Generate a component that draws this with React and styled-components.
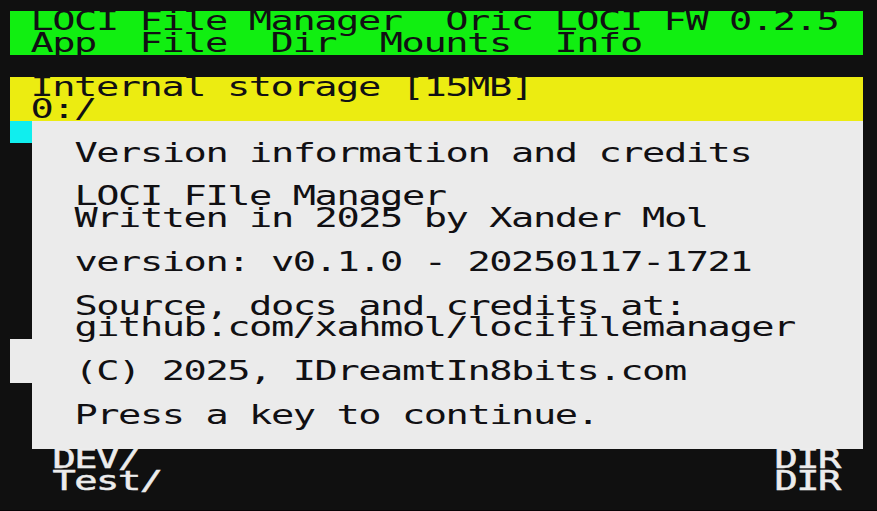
import React from "react";
import styled, { createGlobalStyle } from "styled-components";

const CELL = 21.87;
const ROW = 21.87;

const GlobalStyle = createGlobalStyle`
  body {
    margin: 0;
    background: #101010;
    overflow: hidden;
  }
`;

const Screen = styled.main`
  box-sizing: border-box;
  width: 877px;
  height: 511px;
  padding: 11.35px 14px 0 10.4px;
  display: flex;
  flex-direction: column;
  background: #101010;
  border-bottom: 1px solid #080406;
  overflow: hidden;
`;

const Bar = styled.header`
  flex: none;
  height: ${ROW * 2}px;
  padding-left: ${CELL}px;
  background: ${(p) => p.$color};
`;

const Gap = styled.div`
  flex: none;
  height: ${ROW}px;
`;

const Line = styled.div`
  width: max-content;
  height: ${ROW}px;
  line-height: ${ROW}px;
  font-family: "DejaVu Sans Mono", monospace;
  font-size: 26px;
  letter-spacing: -0.97px;
  white-space: pre;
  color: ${(p) => (p.$light ? "#ececec" : "#111013")};
  -webkit-text-stroke: ${(p) => (p.$light ? "0.5px #ececec" : "0")};
  transform: translate(-1.6px, 0.3px) scaleX(1.487);
  transform-origin: 0 0;
`;

const Body = styled.section`
  flex: none;
  display: flex;
  height: ${ROW * 15}px;
`;

const Gutter = styled.div`
  flex: none;
  width: ${CELL}px;
  display: grid;
  grid-template-rows: ${ROW}px ${ROW * 9}px ${ROW * 2}px ${ROW * 3}px;
`;

const Marker = styled.div`
  background: ${(p) => p.$color};
`;

const Popup = styled.article`
  flex: 1;
  padding: ${ROW}px 0 0 ${CELL * 2}px;
  background: #ebebeb;
`;

const Entry = styled.div`
  flex: none;
  height: ${ROW}px;
  display: grid;
  grid-template-columns: ${CELL * 33}px auto;
  padding-left: ${CELL * 2}px;
`;

const credits = [
  "Version information and credits",
  "",
  "LOCI FIle Manager",
  "Written in 2025 by Xander Mol",
  "",
  "version: v0.1.0 - 20250117-1721",
  "",
  "Source, docs and credits at:",
  "github.com/xahmol/locifilemanager",
  "",
  "(C) 2025, IDreamtIn8bits.com",
  "",
  "Press a key to continue.",
];

const entries = ["DEV/", "Test/"];

export default function App() {
  return (
    <>
      <GlobalStyle />
      <Screen>
        <Bar $color="#11ef11">
          <Line>LOCI File Manager  Oric LOCI FW 0.2.5</Line>
          <Line>App  File  Dir  Mounts  Info</Line>
        </Bar>
        <Gap />
        <Bar $color="#ecec11">
          <Line>Internal storage [15MB]</Line>
          <Line>0:/</Line>
        </Bar>
        <Body>
          <Gutter>
            <Marker $color="#10eeee" />
            <Marker $color="transparent" />
            <Marker $color="#ebebeb" />
          </Gutter>
          <Popup>
            {credits.map((text, i) => (
              <Line key={i}>{text}</Line>
            ))}
          </Popup>
        </Body>
        {entries.map((name) => (
          <Entry key={name}>
            <Line $light>{name}</Line>
            <Line $light>DIR</Line>
          </Entry>
        ))}
      </Screen>
    </>
  );
}
